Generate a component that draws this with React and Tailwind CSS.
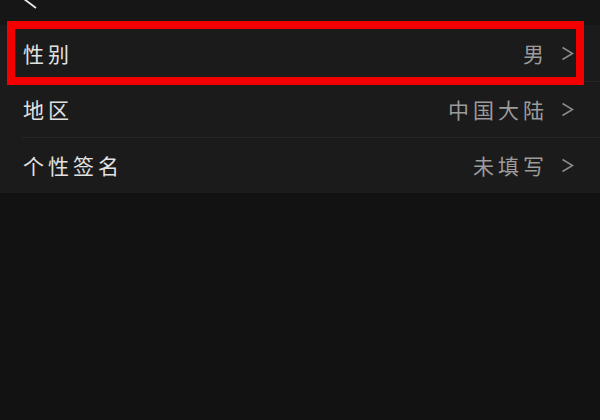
import React from "react";

const rows = [
  { label: "性别", value: "男" },
  { label: "地区", value: "中国大陆" },
  { label: "个性签名", value: "未填写" },
];

function Chevron() {
  return (
    <svg width="13" height="15" viewBox="0 0 13 15" fill="none" className="shrink-0">
      <path d="M1.5 1.5 L11.5 7.5 L1.5 13.5" stroke="#8a8a8a" strokeWidth="1.6" />
    </svg>
  );
}

export default function App() {
  return (
    <div
      className="relative w-[600px] h-[420px] bg-[#121212] overflow-hidden"
      style={{ fontFamily: '"Noto Sans CJK SC", "Noto Sans", sans-serif' }}
    >
      {/* header, only the bottom of the back arrow is visible */}
      <div className="h-[25px] bg-[#161616] overflow-hidden">
        <svg width="24" height="24" viewBox="0 0 24 24" fill="none" className="ml-[18px] -mt-[15px]">
          <path d="M17 3 L6 14 L18 23" stroke="#e8e8e8" strokeWidth="1.8" />
        </svg>
      </div>

      <div className="bg-[#1b1b1b]">
        {rows.map((row, i) => (
          <div key={row.label}>
            {i > 0 && <div className="ml-[22px] h-px bg-[#262626]" />}
            <div className={"flex items-center pl-[23px] pr-[26px] " + (i > 0 ? "h-[55px]" : "h-[56px]")}>
              <span className="text-[21px] tracking-[4px] text-[#e2e2e2] leading-none">{row.label}</span>
              <span className="ml-auto mr-[13px] text-[21px] tracking-[4px] text-[#9c9c9c] leading-none">
                {row.value}
              </span>
              <Chevron />
            </div>
          </div>
        ))}
      </div>

      {/* red highlight frame */}
      <div className="absolute left-[7px] top-[21px] w-[577px] h-[64px] border-[8px] border-[#f20000]" />
    </div>
  );
}
